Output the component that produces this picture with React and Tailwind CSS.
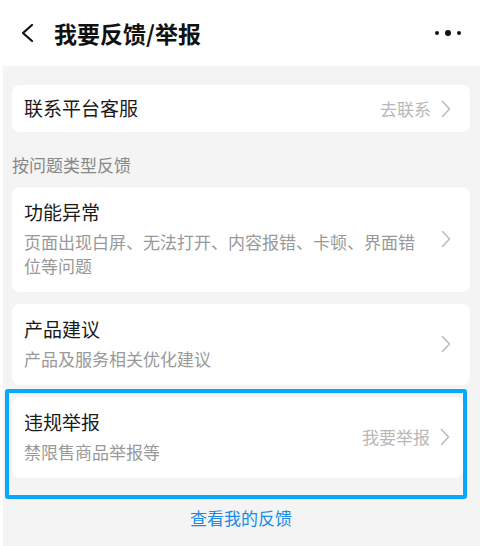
// App.jsx
import React from "react";

const FONT = { fontFamily: '"Noto Sans CJK SC", "Noto Sans", sans-serif' };

function Chevron({ className = "" }) {
  return (
    <svg
      viewBox="0 0 10 18"
      className={`h-[18px] w-[10px] shrink-0 ${className}`}
      fill="none"
      stroke="currentColor"
      strokeWidth="1.6"
      strokeLinecap="round"
      strokeLinejoin="round"
    >
      <path d="M1.5 1.5 L8.5 9 L1.5 16.5" />
    </svg>
  );
}

function TopicCard({ title, desc, action, tight }) {
  return (
    <div
      className={`flex items-center rounded-[8px] bg-white pl-[12px] pt-[12px] pb-[14px] ${
        tight ? "pr-[13px]" : "pr-[19px]"
      }`}
    >
      <div className="min-w-0 flex-1">
        <div className="text-[19px] leading-[26px] text-[#1a1a1a]">{title}</div>
        <div className="mt-[5px] max-w-[400px] text-[17px] leading-[24px] text-[#999]">{desc}</div>
      </div>
      {action && (
        <span className="mr-[10px] whitespace-nowrap text-[17px] leading-[24px] text-[#b8b8b8]">
          {action}
        </span>
      )}
      <Chevron className="text-[#bdbdbd]" />
    </div>
  );
}

export default function App() {
  return (
    <div className="flex h-[546px] w-[480px] flex-col bg-white" style={FONT}>
      <header className="flex h-[66px] shrink-0 items-center bg-white pl-[20px] pr-[19px]">
        <svg
          viewBox="0 0 14 20"
          className="h-[20px] w-[14px]"
          fill="none"
          stroke="#111"
          strokeWidth="2.2"
          strokeLinecap="round"
          strokeLinejoin="round"
        >
          <path d="M12 2 L3 10 L12 18" />
        </svg>
        <h1 className="ml-[20px] flex-1 text-[23px] font-bold leading-none text-[#111]">
          我要反馈/举报
        </h1>
        <div className="flex items-center gap-[6px]">
          <span className="h-[4px] w-[4px] rounded-full bg-[#111]" />
          <span className="h-[6px] w-[6px] rounded-full bg-[#111]" />
          <span className="h-[4px] w-[4px] rounded-full bg-[#111]" />
        </div>
      </header>

      <main className="flex flex-1 flex-col border-l-[3px] border-white bg-[#f4f4f4] pl-[9px] pr-[10px] pt-[19px]">
        <div className="flex h-[47px] items-center rounded-[8px] bg-white pl-[12px] pr-[19px]">
          <span className="flex-1 text-[19px] text-[#1a1a1a]">联系平台客服</span>
          <span className="mr-[10px] text-[17px] text-[#b8b8b8]">去联系</span>
          <Chevron className="text-[#bdbdbd]" />
        </div>

        <div className="mt-[21px] mb-[10px] text-[17px] leading-[24px] text-[#888]">
          按问题类型反馈
        </div>

        <div className="flex flex-col gap-[12px]">
          <TopicCard
            title="功能异常"
            desc="页面出现白屏、无法打开、内容报错、卡顿、界面错位等问题"
          />
          <TopicCard title="产品建议" desc="产品及服务相关优化建议" />
        </div>

        <div className="-ml-[7px] mt-[4px] w-[462px] rounded-[3px] border-[4px] border-[#06a9fb] pl-[3px] pt-[4px] pb-[17px]">
          <TopicCard title="违规举报" desc="禁限售商品举报等" action="我要举报" tight />
        </div>

        <div className="mt-[7px] text-center text-[17px] leading-[24px] text-[#1a8be6]">
          查看我的反馈
        </div>
      </main>
    </div>
  );
}
